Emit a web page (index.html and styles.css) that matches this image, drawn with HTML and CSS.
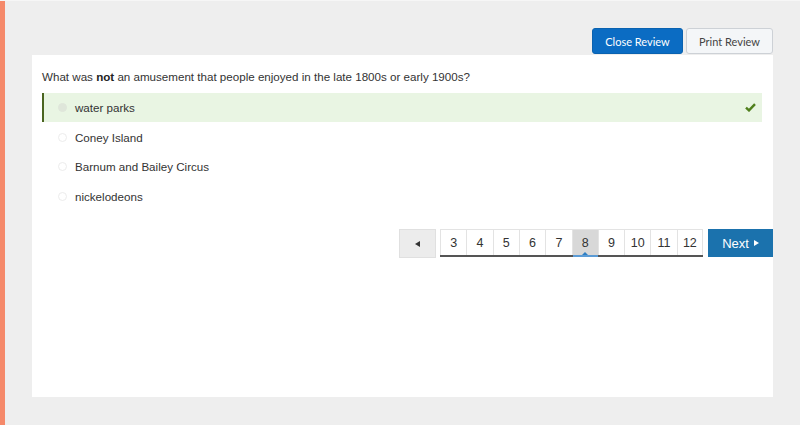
FILE: index.html
```html
<!DOCTYPE html>
<html>
<head>
<meta charset="utf-8">
<link rel="stylesheet" href="styles.css">
</head>
<body>
<div class="page">
  <div class="strip"></div>
  <div class="main">
    <div class="toolbar">
      <button class="btn btn-primary">Close Review</button>
      <button class="btn btn-light">Print Review</button>
    </div>
    <div class="card">
      <p class="question">What was <b>not</b> an amusement that people enjoyed in the late 1800s or early 1900s?</p>
      <ul class="options">
        <li class="option selected">
          <span class="radio"></span>
          <span class="label">water parks</span>
          <svg class="check" width="11" height="9" viewBox="0 0 11 9"><path d="M1 4.6 L4 7.4 L10 1.2" fill="none" stroke="#4f7f1c" stroke-width="2.4"/></svg>
        </li>
        <li class="option"><span class="radio"></span><span class="label">Coney Island</span></li>
        <li class="option"><span class="radio"></span><span class="label">Barnum and Bailey Circus</span></li>
        <li class="option"><span class="radio"></span><span class="label">nickelodeons</span></li>
      </ul>
      <div class="pager">
        <button class="prev"><span class="tri-left"></span></button>
        <div class="pages">
          <span class="pg">3</span><span class="pg">4</span><span class="pg">5</span><span class="pg">6</span><span class="pg">7</span><span class="pg current">8</span><span class="pg">9</span><span class="pg">10</span><span class="pg">11</span><span class="pg">12</span>
        </div>
        <button class="next">Next <span class="tri-right"></span></button>
      </div>
    </div>
  </div>
</div>
</body>
</html>
```

FILE: styles.css
```css
* { box-sizing: border-box; }
html, body { margin: 0; padding: 0; }
body {
  background: #eeeeee;
  font-family: "Liberation Sans", Arial, sans-serif;
  color: #333;
  height: 425px;
  overflow: hidden;
}
.page { display: flex; height: 425px; border-top: 1px solid #f6f6f6; }
.strip { width: 5px; background: #f5896a; flex: none; }
.main { flex: 1; padding: 27px 27px 0 27px; }
.toolbar { display: flex; justify-content: flex-end; gap: 3px; height: 27px; }
.btn {
  height: 26px;
  font-family: Lato, "Liberation Sans", sans-serif;
  font-size: 11px;
  border-radius: 3px;
  padding: 0;
  cursor: pointer;
}
.btn-primary { width: 91px; background: #0b6cc3; color: #fff; border: 1px solid #0a62b0; }
.btn-light { width: 87px; background: #f4f6f8; color: #444; border: 1px solid #cdd1d6; }
.card {
  background: #fff;
  height: 342px;
  padding: 14px 0 0 10px;
}
.question { margin: 0; font-size: 11.6px; line-height: 15px; color: #333; }
.question b { font-weight: bold; color: #222; }
.options { list-style: none; margin: 9px 11px 0 0; padding: 0; }
.option {
  display: flex;
  align-items: center;
  height: 29.5px;
  padding-left: 14px;
  font-size: 11.6px;
  color: #333;
  border-left: 2px solid transparent;
}
.option.selected { background: #e9f5e3; border-left-color: #4a6520; height: 29px; margin-bottom: 0.5px; }
.radio {
  width: 9px; height: 9px; border-radius: 50%;
  border: 1px solid #ececec;
  margin-right: 8px;
  flex: none;
}
.selected .radio { background: #dfe6da; border-color: #dfe6da; }
.label { flex: 1; }
.check { margin-right: 6px; }
.pager {
  display: flex;
  justify-content: flex-end;
  align-items: flex-start;
  margin-top: 18px;
}
.prev {
  width: 37px; height: 29px;
  background: #ececec;
  border: 1px solid #e0e0e0;
  padding: 0;
  margin-right: 4px;
  display: flex; align-items: center; justify-content: center;
}
.tri-left { width: 0; height: 0; border-top: 3px solid transparent; border-bottom: 3px solid transparent; border-right: 5px solid #333; }
.pages {
  display: flex;
  border-bottom: 2px solid #555;
  height: 28px;
  margin-right: 5px;
}
.pg {
  width: 26.3px;
  height: 26px;
  display: flex; align-items: center; justify-content: center;
  font-size: 12.5px;
  color: #333;
  border-left: 1px solid #e3e3e3;
  border-top: 1px solid #e3e3e3;
  position: relative;
}
.pg:last-child { border-right: 1px solid #e3e3e3; }
.pg.current { background: #d8d8d8; }
.pg.current::after {
  content: "";
  position: absolute;
  left: 0; right: 0; bottom: -2px; height: 2px;
  background: #5b9bd5;
}
.pg.current::before {
  content: "";
  position: absolute;
  left: 50%; bottom: 0; margin-left: -3px;
  width: 0; height: 0;
  border-left: 3px solid transparent; border-right: 3px solid transparent;
  border-bottom: 3px solid #2e7fc4;
}
.next {
  width: 65px; height: 28px;
  background: #1b72ad;
  border: none;
  color: #fff;
  font-family: "Liberation Sans", Arial, sans-serif;
  font-size: 13px;
  padding: 0;
  display: flex; align-items: center; justify-content: center; gap: 5px;
}
.tri-right { width: 0; height: 0; border-top: 3px solid transparent; border-bottom: 3px solid transparent; border-left: 5px solid #fff; }
```
